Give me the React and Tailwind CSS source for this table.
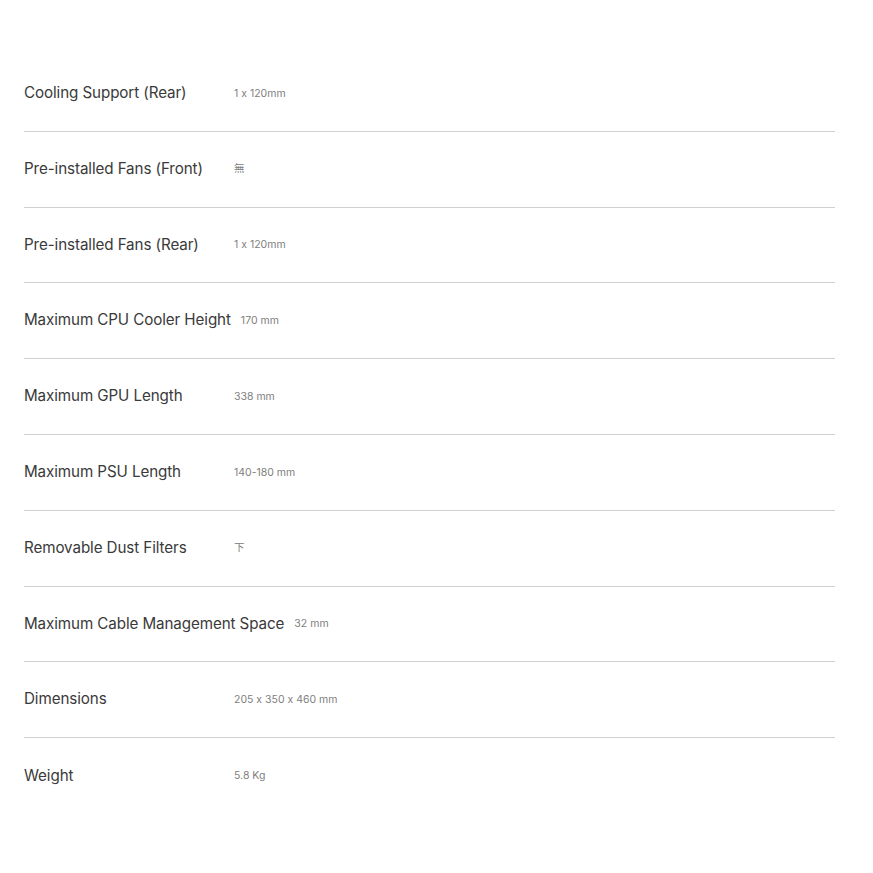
import React from 'react';

const specs = [
    { label: 'Cooling Support (Rear)', value: '1 x 120mm' },
    { label: 'Pre-installed Fans (Front)', value: '無' },
    { label: 'Pre-installed Fans (Rear)', value: '1 x 120mm' },
    { label: 'Maximum CPU Cooler Height', value: '170 mm' },
    { label: 'Maximum GPU Length', value: '338 mm' },
    { label: 'Maximum PSU Length', value: '140-180 mm' },
    { label: 'Removable Dust Filters', value: '下' },
    { label: 'Maximum Cable Management Space', value: '32 mm' },
    { label: 'Dimensions', value: '205 x 350 x 460 mm' },
    { label: 'Weight', value: '5.8 Kg' },
];

const App = () => {
    return (
        <div className="min-h-screen bg-white pt-[56px] pl-[24px] pr-[38px]" style={{ fontFamily: 'Inter, "Noto Sans CJK TC", sans-serif' }}>
            {specs.map((spec, i) => (
                <div
                    key={spec.label}
                    className={`flex items-center h-[75.8px] ${i < specs.length - 1 ? 'border-b border-[#d0d0d0]' : ''}`}
                >
                    <div className="min-w-[200px] text-[15.2px] font-normal text-[#3a3a3a] tracking-[-0.1px]">{spec.label}</div>
                    <div className="ml-[10px] text-[10.5px] text-[#808080] [font-feature-settings:'calt'_0]">{spec.value}</div>
                </div>
            ))}
        </div>
    );
};

export default App;
